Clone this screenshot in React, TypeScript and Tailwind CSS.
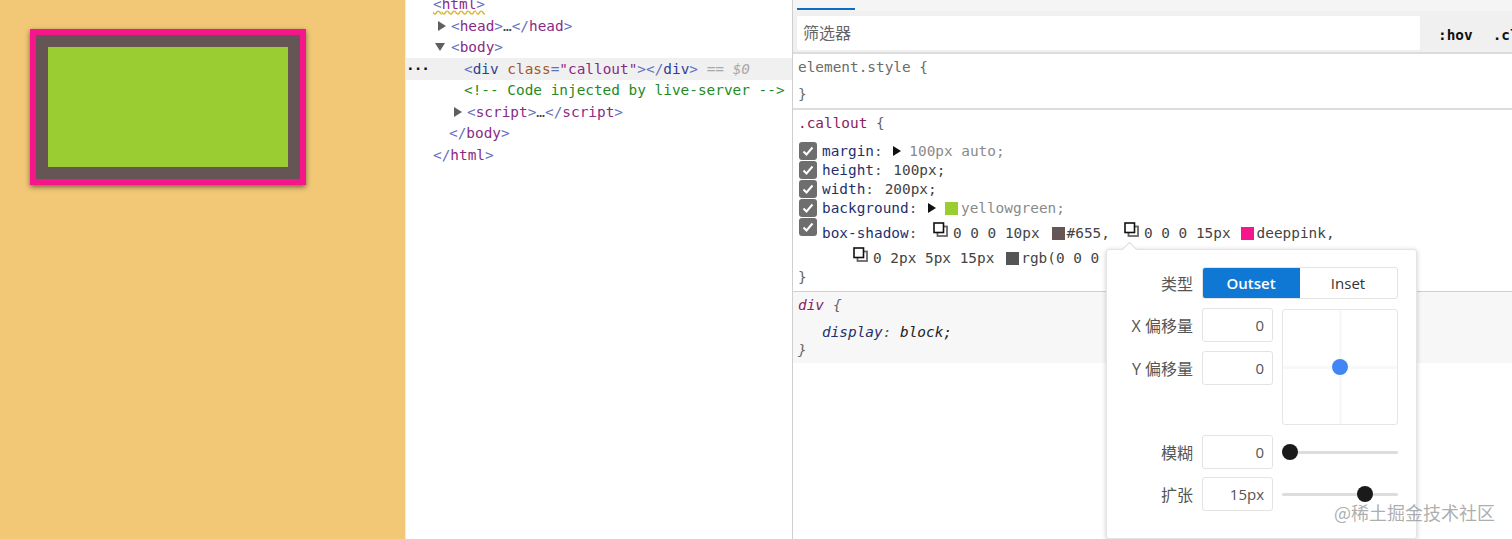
import React from 'react';

const mono = "font-['DejaVu_Sans_Mono',monospace] text-[14.4px] leading-none whitespace-pre";
const ui = "font-['Open_Sans','Noto_Sans_CJK_SC',sans-serif] text-[15px] leading-none";
const cjk = "font-['Open_Sans','Noto_Sans_CJK_SC',sans-serif] text-[16px] leading-none";

const Arrow = ({ open = false, color = '#5f5f5f' }: { open?: boolean; color?: string }) => (
  <svg width="10" height="10" viewBox="0 0 10 10" className="shrink-0">
    <path d={open ? 'M0 1h10L5 9z' : 'M1 0v10L9 5z'} fill={color} />
  </svg>
);

// black square in front, grey one peeking out lower right
const ShadowIcon = () => (
  <svg width="15" height="15" viewBox="0 0 15 15" className="shrink-0" fill="none">
    <rect x="4.5" y="4.5" width="9.5" height="9.5" fill="#fff" stroke="#666" strokeWidth="1.8" />
    <rect x="1" y="1" width="9.5" height="9.5" fill="#fff" stroke="#111" strokeWidth="1.6" />
  </svg>
);

const Check = () => (
  <div className="w-[18px] h-[18px] rounded-[3px] bg-[#6e6e6e] flex items-center justify-center shrink-0">
    <svg width="14" height="14" viewBox="0 0 14 14" fill="none">
      <path d="M2.5 7.5l3 3 6-7" stroke="#fff" strokeWidth="2" />
    </svg>
  </div>
);

const NodeLine = ({ pad, children, className = '' }: { pad: string; children: React.ReactNode; className?: string }) => (
  <div className={`h-[21.5px] flex items-center ${pad} ${className}`}>{children}</div>
);

const Elements = () => {
  const b = 'text-[#5f6fc0]';
  const t = 'text-[#8a2a86]';
  return (
    <div className={`w-[387px] shrink-0 bg-white border-l border-[#eeeedd] overflow-hidden ${mono}`}>
      <div className="-mt-[6.5px]">
        <NodeLine pad="pl-[27px]">
          <span className={`${b} underline decoration-wavy decoration-[#d8b93a]`}>
            &lt;<span className={t}>html</span>&gt;
          </span>
        </NodeLine>
        <NodeLine pad="pl-[31px] gap-[4px]">
          <Arrow />
          <span>
            <span className={b}>&lt;</span><span className={t}>head</span><span className={b}>&gt;</span>
            <span className="text-[#444]">…</span>
            <span className={b}>&lt;/</span><span className={t}>head</span><span className={b}>&gt;</span>
          </span>
        </NodeLine>
        <NodeLine pad="pl-[29px] gap-[6px]">
          <Arrow open />
          <span>
            <span className={b}>&lt;</span><span className={t}>body</span><span className={b}>&gt;</span>
          </span>
        </NodeLine>
        <NodeLine pad="" className="bg-[#f0f0f0]">
          <span className="w-[58px] text-[#111] font-bold tracking-[-1px]">···</span>
          <span>
            <span className={b}>&lt;</span><span className="text-[#2f3f95]">div</span>{' '}
            <span className="text-[#a0562a]">class</span><span className={b}>=</span>
            <span className="text-[#8a2a86]">"callout"</span><span className={b}>&gt;&lt;/</span>
            <span className="text-[#2f3f95]">div</span><span className={b}>&gt;</span>
            <span className="text-[#a8a8a8] italic"> == $0</span>
          </span>
        </NodeLine>
        <NodeLine pad="pl-[58px]" className="text-[#1f8a24]">{'<!-- Code injected by live-server -->'}</NodeLine>
        <NodeLine pad="pl-[47px] gap-[4px]">
          <Arrow />
          <span>
            <span className={b}>&lt;</span><span className={t}>script</span><span className={b}>&gt;</span>
            <span className="text-[#444]">…</span>
            <span className={b}>&lt;/</span><span className={t}>script</span><span className={b}>&gt;</span>
          </span>
        </NodeLine>
        <NodeLine pad="pl-[43px]">
          <span>
            <span className={b}>&lt;/</span><span className={t}>body</span><span className={b}>&gt;</span>
          </span>
        </NodeLine>
        <NodeLine pad="pl-[27px]">
          <span>
            <span className={b}>&lt;/</span><span className={t}>html</span><span className={b}>&gt;</span>
          </span>
        </NodeLine>
      </div>
    </div>
  );
};

const Prop = ({ name, children }: { name: string; children: React.ReactNode }) => (
  <div className="flex items-start pl-[6px] gap-[5px] h-[19px]">
    <Check />
    <div className="flex items-center h-[18px] text-[#1f2f70]">
      <span>{name}</span>
      <span className="text-[#555]">: </span>
      {children}
    </div>
  </div>
);

const Styles = () => (
  <div className={`flex-1 min-w-0 border-l border-[#cfcfcf] flex flex-col overflow-hidden ${mono}`}>
    <div className="h-[11px] bg-[#f5f5f5] pl-[4px] flex flex-col justify-end">
      <div className="w-[58px] h-[2px] bg-[#0f6cc4] mb-px" />
    </div>
    <div className="h-[43px] bg-[#f0f0f0] border-b-2 border-[#dcdcdc] flex pt-[5px] pl-[4px]">
      <div className={`w-[623px] h-[34px] shrink-0 bg-white rounded-[2px] flex items-center pl-[6px] text-[#666] ${cjk}`}>筛选器</div>
      <span className="ml-[18px] mt-[12px] font-bold text-[#111]">:hov</span>
      <span className="ml-[20px] mt-[12px] font-bold text-[#111]">.cl</span>
    </div>
    <div className="h-[56px] border-b-2 border-[#dcdcdc] pl-[5px] text-[#6b6b6b]">
      <div className="h-[26px] flex items-center">element.style {'{'}</div>
      <div className="h-[28px] flex items-center">{'}'}</div>
    </div>
    <div className="h-[182px] border-b border-[#cfcfcf]">
      <div className="h-[26px] mb-[6px] pl-[5px] flex items-center text-[#8a2060]">
        .callout<span className="text-[#666]"> {'{'}</span>
      </div>
      <Prop name="margin">
        <span className="flex items-center gap-[7px] ml-[1px] text-[#8a8a8a]">
          <Arrow color="#111" />
          100px auto;
        </span>
      </Prop>
      <Prop name="height">
        <span className="ml-[2px] text-[#444]">100px;</span>
      </Prop>
      <Prop name="width">
        <span className="ml-[2px] text-[#444]">200px;</span>
      </Prop>
      <Prop name="background">
        <span className="flex items-center ml-[1px] text-[#8a8a8a]">
          <Arrow color="#111" />
          <span className="w-[13px] h-[13px] bg-[#9acd32] ml-[8px] mr-[3px] shrink-0" />
          yellowgreen;
        </span>
      </Prop>
      <div className="flex pl-[6px] gap-[5px] h-[27px]">
        <Check />
        <div className="flex items-center h-[30px] text-[#1f2f70]">
          <span>box-shadow</span>
          <span className="text-[#555]">: </span>
          <div className="flex items-center text-[#444] ml-[7px]">
            <div className="-mt-[8px]"><ShadowIcon /></div>
            <span className="ml-[5px]">0 0 0 10px</span>
            <span className="w-[13px] h-[13px] bg-[#665555] ml-[12px] mr-[2px]" />
            <span>#655,</span>
            <div className="-mt-[8px] ml-[14px]"><ShadowIcon /></div>
            <span className="ml-[5px]">0 0 0 15px</span>
            <span className="w-[13px] h-[13px] bg-[#f5168c] ml-[10px] mr-[3px]" />
            <span>deeppink,</span>
          </div>
        </div>
      </div>
      <div className="h-[26px] pl-[60px] flex items-center text-[#444]">
        <div className="-mt-[8px]"><ShadowIcon /></div>
        <span className="ml-[5px]">0 2px 5px 15px</span>
        <span className="w-[13px] h-[13px] bg-[#555] ml-[12px] mr-[2px]" />
        <span>rgb(0 0 0</span>
      </div>
      <div className="h-[12px] pl-[5px] flex items-center text-[#666]">{'}'}</div>
    </div>
    <div className="h-[71px] bg-[#f7f7f7] italic pl-[5px]">
      <div className="h-[26px] flex items-center text-[#8a2060]">div<span className="text-[#666] ml-[9px]">{'{'}</span></div>
      <div className="h-[28px] pl-[24px] flex items-center text-[#1f2f70]">display<span className="text-[#555]">: </span><span className="text-[#222]">block;</span></div>
      <div className="h-[8px] flex items-center text-[#666]">{'}'}</div>
    </div>
    <div className="flex-1 bg-white" />
  </div>
);

const NumberBox = ({ value }: { value: string }) => (
  <div className={`w-[71px] h-[34px] shrink-0 border border-[#e3e3e3] rounded-[3px] bg-white flex items-center justify-end pr-[8px] pt-px text-[#555] ${ui}`}>
    {value}
  </div>
);

const Label = ({ children }: { children: React.ReactNode }) => (
  <div className={`w-[86px] shrink-0 flex items-center justify-end pt-px text-[#555] h-[34px] ${cjk}`}>{children}</div>
);

const Slider = ({ pos }: { pos: 'start' | 'mid' }) => (
  <div className="relative w-[116px] h-[34px] ml-[9px] flex items-center">
    <div className="w-full h-[3px] bg-[#dddddd] rounded-full" />
    <div className={`absolute top-[9px] w-4 h-4 rounded-full bg-[#1a1a1a] ${pos === 'start' ? 'left-0' : 'left-[75px]'}`} />
  </div>
);

const ShadowPopover = () => (
  <div className={`absolute left-[1106px] top-[249px] w-[311px] h-[290px] bg-white rounded-[3px] border border-[#e4e4e4] shadow-[0_1px_5px_rgba(0,0,0,0.2)] pt-[17px] ${ui}`}>
    <div className="absolute -top-[6px] left-[17px] w-[11px] h-[11px] rotate-45 bg-white border-l border-t border-[#dddddd]" />
    <div className="flex items-center relative">
      <div className={`w-[86px] flex justify-end pt-px text-[#555] ${cjk}`}>类型</div>
      <div className="ml-[9px] w-[196px] h-[32px] flex rounded-[3px] border border-[#e3e3e3] overflow-hidden">
        <div className="w-[98px] -m-px pt-px bg-[#0f78d4] text-white font-semibold flex items-center justify-center">Outset</div>
        <div className="flex-1 flex items-center justify-center pt-px text-[#333]">Inset</div>
      </div>
    </div>
    <div className="flex mt-[9px]">
      <div className="flex flex-col gap-[9px]">
        <div className="flex"><Label>X 偏移量</Label><div className="ml-[9px]"><NumberBox value="0" /></div></div>
        <div className="flex"><Label>Y 偏移量</Label><div className="ml-[9px]"><NumberBox value="0" /></div></div>
      </div>
      <div className="relative ml-[9px] mt-px w-[116px] h-[116px] border border-[#e6e6e6] rounded-[3px] flex items-center justify-center">
        <div className="absolute left-0 right-0 top-[56px] h-[3px] bg-[#f7f8f9]" />
        <div className="absolute top-0 bottom-0 left-[56px] w-[3px] bg-[#f7f8f9]" />
        <div className="relative w-4 h-4 rounded-full bg-[#4285f4]" />
      </div>
    </div>
    <div className="flex mt-[10px]">
      <Label>模糊</Label>
      <div className="ml-[9px]"><NumberBox value="0" /></div>
      <Slider pos="start" />
    </div>
    <div className="flex mt-[8px]">
      <Label>扩张</Label>
      <div className="ml-[9px]"><NumberBox value="15px" /></div>
      <Slider pos="mid" />
    </div>
  </div>
);

export default function App() {
  return (
    <div className="relative w-[1512px] h-[539px] flex overflow-hidden bg-white">
      <div className="w-[405px] shrink-0 bg-[#f2c877] pt-[47px] pl-[48px]">
        <div className="w-[240px] h-[120px] bg-[#9acd32] shadow-[0_0_0_12px_#665555,0_0_0_18px_#f5168c,0_2px_5px_18px_rgba(0,0,0,0.5)]" />
      </div>
      <Elements />
      <Styles />
      <ShadowPopover />
      <div className="absolute left-[1334px] top-[501px] font-['Noto_Sans_CJK_SC',sans-serif] text-[18px] leading-[22px] text-[#8a8a8a]/70">@稀土掘金技术社区</div>
    </div>
  );
}
